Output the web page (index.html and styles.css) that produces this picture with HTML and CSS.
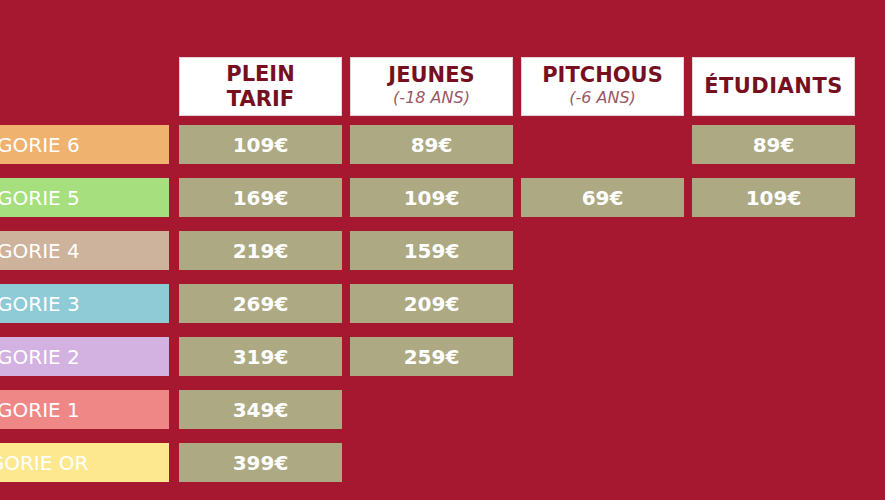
FILE: index.html
```html
<!DOCTYPE html>
<html lang="fr">
<head>
<meta charset="utf-8">
<title>Tarifs</title>
<link rel="stylesheet" href="styles.css">
</head>
<body>
<div class="page">
  <div class="head">
    <div class="corner"></div>
    <div class="hcell"><span class="ht">PLEIN<br>TARIF</span></div>
    <div class="hcell"><span class="ht">JEUNES</span><span class="hs">(-18 ANS)</span></div>
    <div class="hcell"><span class="ht">PITCHOUS</span><span class="hs">(-6 ANS)</span></div>
    <div class="hcell"><span class="ht wide">ÉTUDIANTS</span></div>
  </div>
  <div class="body">
    <div class="cat c6">CATÉGORIE 6</div>
    <div class="price">109€</div><div class="price">89€</div><div class="empty"></div><div class="price">89€</div>

    <div class="cat c5">CATÉGORIE 5</div>
    <div class="price">169€</div><div class="price">109€</div><div class="price">69€</div><div class="price">109€</div>

    <div class="cat c4">CATÉGORIE 4</div>
    <div class="price">219€</div><div class="price">159€</div><div class="empty"></div><div class="empty"></div>

    <div class="cat c3">CATÉGORIE 3</div>
    <div class="price">269€</div><div class="price">209€</div><div class="empty"></div><div class="empty"></div>

    <div class="cat c2">CATÉGORIE 2</div>
    <div class="price">319€</div><div class="price">259€</div><div class="empty"></div><div class="empty"></div>

    <div class="cat c1">CATÉGORIE 1</div>
    <div class="price">349€</div><div class="empty"></div><div class="empty"></div><div class="empty"></div>

    <div class="cat cor">CATÉGORIE OR</div>
    <div class="price">399€</div><div class="empty"></div><div class="empty"></div><div class="empty"></div>
  </div>
</div>
</body>
</html>
```
FILE: styles.css
```css
html, body {
  margin: 0;
  padding: 0;
}
body {
  width: 885px;
  height: 500px;
  overflow: hidden;
  background: #a6182f;
  font-family: "DejaVu Sans", "Liberation Sans", sans-serif;
}
.page {
  padding-top: 57px;
  margin-left: -143px;
}
.head, .body {
  display: grid;
  grid-template-columns: 314px repeat(4, 163px);
  column-gap: 8px;
}
.head {
  height: 59px;
  margin-bottom: 9px;
}
.hcell {
  background: #ffffff;
  box-shadow: inset 0 0 0 1px #e6d2d6;
  display: flex;
  flex-direction: column;
  align-items: center;
  justify-content: center;
  color: #76101f;
  text-align: center;
}
.ht {
  font-weight: 700;
  font-size: 21px;
  line-height: 25px;
}
.wide {
  letter-spacing: 0.5px;
}
.hs {
  font-style: italic;
  font-size: 16px;
  line-height: 19px;
  color: #9a5866;
  margin-bottom: 3px;
}
.body {
  grid-auto-rows: 39px;
  row-gap: 14px;
}
.cat {
  margin-right: 2px;
  display: flex;
  align-items: center;
  justify-content: center;
  color: #ffffff;
  font-size: 20px;
  white-space: nowrap;
}
.c6 { background: #efb26f; }
.c5 { background: #a6df7e; }
.c4 { background: #cdb39c; }
.c3 { background: #8ecbd6; }
.c2 { background: #d3b2e2; }
.c1 { background: #f08787; }
.cor { background: #fde890; }
.price {
  background: #aca983;
  display: flex;
  align-items: center;
  justify-content: center;
  color: #ffffff;
  font-weight: 700;
  font-size: 20px;
}
```
